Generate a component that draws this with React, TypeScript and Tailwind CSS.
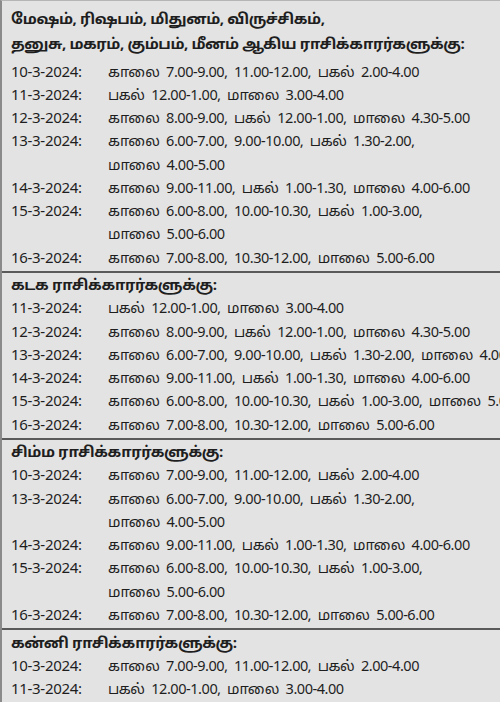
import React from "react";

type Row = { d: string; t: string[] };
type Section = { title: string[]; rows: Row[] };

const sections: Section[] = [
  {
    title: ["மேஷம், ரிஷபம், மிதுனம், விருச்சிகம்,", "தனுசு, மகரம், கும்பம், மீனம் ஆகிய ராசிக்காரர்களுக்கு:"],
    rows: [
      { d: "10-3-2024:", t: ["காலை  7.00-9.00,  11.00-12.00,  பகல்  2.00-4.00"] },
      { d: "11-3-2024:", t: ["பகல்  12.00-1.00,  மாலை  3.00-4.00"] },
      { d: "12-3-2024:", t: ["காலை  8.00-9.00,  பகல்  12.00-1.00,  மாலை  4.30-5.00"] },
      { d: "13-3-2024:", t: ["காலை  6.00-7.00,  9.00-10.00,  பகல்  1.30-2.00,", "மாலை  4.00-5.00"] },
      { d: "14-3-2024:", t: ["காலை  9.00-11.00,  பகல்  1.00-1.30,  மாலை  4.00-6.00"] },
      { d: "15-3-2024:", t: ["காலை  6.00-8.00,  10.00-10.30,  பகல்  1.00-3.00,", "மாலை  5.00-6.00"] },
      { d: "16-3-2024:", t: ["காலை  7.00-8.00,  10.30-12.00,  மாலை  5.00-6.00"] },
    ],
  },
  {
    title: ["கடக ராசிக்காரர்களுக்கு:"],
    rows: [
      { d: "11-3-2024:", t: ["பகல்  12.00-1.00,  மாலை  3.00-4.00"] },
      { d: "12-3-2024:", t: ["காலை  8.00-9.00,  பகல்  12.00-1.00,  மாலை  4.30-5.00"] },
      { d: "13-3-2024:", t: ["காலை  6.00-7.00,  9.00-10.00,  பகல்  1.30-2.00,  மாலை  4.00-5.00"] },
      { d: "14-3-2024:", t: ["காலை  9.00-11.00,  பகல்  1.00-1.30,  மாலை  4.00-6.00"] },
      { d: "15-3-2024:", t: ["காலை  6.00-8.00,  10.00-10.30,  பகல்  1.00-3.00,  மாலை  5.00-6.00"] },
      { d: "16-3-2024:", t: ["காலை  7.00-8.00,  10.30-12.00,  மாலை  5.00-6.00"] },
    ],
  },
  {
    title: ["சிம்ம ராசிக்காரர்களுக்கு:"],
    rows: [
      { d: "10-3-2024:", t: ["காலை  7.00-9.00,  11.00-12.00,  பகல்  2.00-4.00"] },
      { d: "13-3-2024:", t: ["காலை  6.00-7.00,  9.00-10.00,  பகல்  1.30-2.00,", "மாலை  4.00-5.00"] },
      { d: "14-3-2024:", t: ["காலை  9.00-11.00,  பகல்  1.00-1.30,  மாலை  4.00-6.00"] },
      { d: "15-3-2024:", t: ["காலை  6.00-8.00,  10.00-10.30,  பகல்  1.00-3.00,", "மாலை  5.00-6.00"] },
      { d: "16-3-2024:", t: ["காலை  7.00-8.00,  10.30-12.00,  மாலை  5.00-6.00"] },
    ],
  },
  {
    title: ["கன்னி ராசிக்காரர்களுக்கு:"],
    rows: [
      { d: "10-3-2024:", t: ["காலை  7.00-9.00,  11.00-12.00,  பகல்  2.00-4.00"] },
      { d: "11-3-2024:", t: ["பகல்  12.00-1.00,  மாலை  3.00-4.00"] },
    ],
  },
];

export default function App() {
  return (
    <div
      className="w-[500px] h-[702px] overflow-hidden bg-[#e3e3e3] text-[#1e1e1e] border-l-2 border-t border-l-[#8a8a8a] border-t-[#b5b5b5]"
      style={{ fontFamily: '"Noto Sans Tamil", "Liberation Sans", sans-serif' }}
    >
      {sections.map((s, i) => (
        <div
          key={i}
          className={
            i === 0
              ? "pt-[6.5px] pl-[9px]"
              : "pt-[2.5px] pl-[9px] border-t-2 border-[#5a5a5a]"
          }
        >
          <div
            className={
              i === 0
                ? "text-[15px] font-bold tracking-[-0.4px] leading-[25px] whitespace-nowrap mb-[4px]"
                : "text-[15px] font-bold tracking-[-0.4px] leading-[23px] whitespace-nowrap"
            }
          >
            {s.title.map((l, j) => (
              <div key={j}>{l}</div>
            ))}
          </div>
          <div className="leading-[23.25px] whitespace-pre">
            {s.rows.map((r, j) => (
              <div key={j} className="flex">
                <div className="w-[97px] shrink-0 text-[15px] tracking-[-0.3px]">{r.d}</div>
                <div className="text-[14.5px] tracking-[-0.45px]">
                  {r.t.map((l, k) => (
                    <div key={k}>{l}</div>
                  ))}
                </div>
              </div>
            ))}
          </div>
        </div>
      ))}
    </div>
  );
}
